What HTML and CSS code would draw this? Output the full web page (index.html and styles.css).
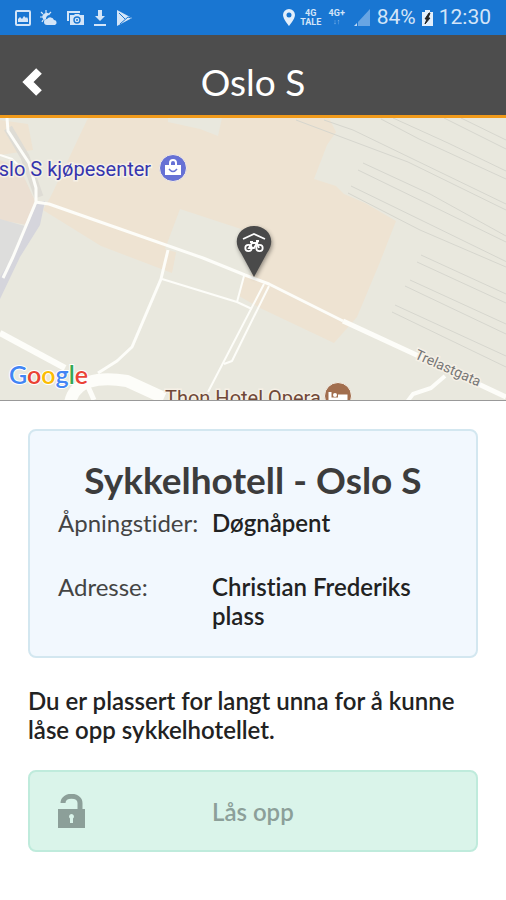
FILE: index.html
```html
<!DOCTYPE html>
<html lang="no">
<head>
  <meta charset="UTF-8">
  <meta name="viewport" content="width=device-width, initial-scale=1.0">
  <title>Oslo S</title>
  <link rel="stylesheet" href="styles.css">
</head>
<body>
  <div class="statusbar">
    <div class="status-left">
      <svg width="16" height="16" viewBox="0 0 16 16">
        <rect x="1" y="1" width="14" height="14" rx="1" fill="none" stroke="currentColor" stroke-width="2"/>
        <path d="M3 12V9l2-2 2 2 2-3 2 2 1-1 1 2v3z" fill="currentColor"/>
      </svg>
      <svg width="18" height="16" viewBox="0 0 18 16">
        <path d="M6 0v3M1 2l2 2M0 7h3M11 2L9 4M2 12l1-2" stroke="currentColor" stroke-width="1.2"/>
        <path d="M3 9a4 4 0 0 1 7-4C7 5 6 7 6 9c-1 0-2 1-2 2z" fill="currentColor"/>
        <path d="M7 15a3 3 0 0 1 0-6 4 4 0 0 1 7 1 2.6 2.6 0 0 1 1 5z" fill="currentColor"/>
      </svg>
      <svg width="17" height="16" viewBox="0 0 17 16">
        <path d="M1 11V2h12" fill="none" stroke="currentColor" stroke-width="2"/>
        <path d="M3 5h4l1-1h4l1 1h4v10H3z" fill="currentColor"/>
        <circle cx="10" cy="10" r="3" fill="none" stroke="#1976d2" stroke-width="1.4"/>
        <circle cx="10" cy="10" r="1" fill="#1976d2"/>
      </svg>
      <svg width="14" height="16" viewBox="0 0 14 16">
        <path d="M5 0h4v6h3l-5 5-5-5h3zM1 14h12v2H1z" fill="currentColor"/>
      </svg>
      <svg width="16" height="16" viewBox="0 0 16 16">
        <path d="M1 0l15 8-15 8z" fill="currentColor"/>
        <path d="M3 3l6 6M15 8l-3-1-8 7" fill="none" stroke="#1976d2" stroke-width="1"/>
      </svg>
    </div>
    <div class="status-right">
      <svg width="12" height="17" viewBox="0 0 12 17">
        <path d="M6 0a6 6 0 0 0-6 6c0 4 6 11 6 11s6-7 6-11a6 6 0 0 0-6-6zm0 3.500a2.500 2.500 0 1 1 0 5 2.500 2.500 0 0 1 0-5z" fill="#e3effb" fill-rule="evenodd"/>
      </svg>
      <span class="net"><span>4G</span><span>TALE</span></span>
      <span class="net"><span>4G+</span><span class="arrows">↓↑</span></span>
      <svg width="18" height="17" viewBox="0 0 18 17">
        <path d="M17 0v17H5V13z" fill="#68a5e3"/>
        <path d="M4 14v3H1z" fill="#c3dcf5"/>
      </svg>
      <span class="status-text">84%</span>
      <svg width="11" height="16" viewBox="0 0 11 16">
        <path d="M3 0h5v2h3v14H0V2h3z" fill="#e3effb"/>
        <path d="M7 3L3 9h2l-2 5 5-6H6l2-5z" fill="#222" stroke="#222"/>
      </svg>
      <span class="status-text">12:30</span>
    </div>
  </div>

  <header class="header">
    <button class="back" aria-label="Tilbake">
      <svg width="20" height="28" viewBox="0 0 20 28">
        <path d="M17 3L6 14l11 11" fill="none" stroke="#fff" stroke-width="8"/>
      </svg>
    </button>
    <h1>Oslo S</h1>
  </header>

  <div class="map">
    <svg viewBox="0 118 506 282" preserveAspectRatio="xMidYMid slice">
      <rect y="118" width="506" height="282" fill="#e9e8de"/>
      <!-- buildings -->
      <g fill="#eee3d2">
        <path d="M88 118h241l7 14-9 13-13 34 22 7 8 8 21 9 31 18-16 41-23 55-23 26-74-35-21-12 5-22 8 1-4-21-68-21-8 40-71-27-58-36 8-14z"/>
        <path d="M0 120l28 4 5 26-33 5z"/>
        <path d="M0 160l20 8 15 33-8 24-27-5z" fill="#ebdfd2"/>
      </g>
      <path d="M168 118h54l-4 18-18-7-32-7z" fill="#e9e8de"/>
      <path d="M180 209l61 20-4 16 12 28-84-24z" fill="#e9e8de"/>
      <path d="M0 219l32 9-19 32-13 20z" fill="#dddddc"/>
      <path d="M37 203l8-2-5 24-20 32-20 42v-22l15-24z" fill="#d5d5dc"/>
      <path d="M8 128l17 29 14 40" fill="none" stroke="#dedcd5" stroke-width="9"/>
      <!-- railway tracks -->
      <g fill="none" stroke="#d6d6ce" stroke-width="1">
        <path d="M296 120l112 42 98 48M324 120l29 10 153 74"/>
        <path d="M381 119l38 20 87 40M393 118l55 25 58 28M444 118l62 31M461 118l45 22"/>
        <path d="M358 170l70 34 78 38M363 163l67 31 76 42"/>
        <path d="M348 193l72 37 86 37M351 186l72 35 86 42"/>
        <path d="M421 255l85 39M417 262l89 41M410 280l96 44M405 286l101 48"/>
        <path d="M395 305l111 51M392 312l114 55"/>
      </g>
      <!-- streets -->
      <g fill="none" stroke="#fdfdf9" stroke-linejoin="round">
        <path d="M7 118l1 13 21 32 7 25 0 14-23 55-10 21" stroke-width="3"/>
        <path d="M0 155l12 4 9 9" stroke-width="2"/>
        <path d="M35 202l14 2 154 54 42 17 24 9 74 37" stroke-width="3"/>
        <path d="M343 321l80 37 83 39" stroke-width="5"/>
        <path d="M168 250l-7 29-29 68-15 14-19 12" stroke-width="3"/>
        <path d="M162 279l75 23 15 7M244 276l-7 26" stroke-width="2"/>
        <path d="M264 284l-56 108M269 286l-37 75-8 3" stroke-width="2"/>
        <path d="M445 376l-14 12-18 6-6 8" stroke-width="4"/>
        <path d="M0 333l65 35" stroke-width="6"/>
        <path d="M70 403c4-22 28-27 57-22l37 17" stroke-width="12"/>
        <path d="M86 382l8 18" stroke-width="5"/>
      </g>
      <g class="map-text">
        <text x="-15" y="176" font-size="20" fill="#3535ae">Oslo S kjøpesenter</text>
        <text x="165" y="405" font-size="20" fill="#704838">Thon Hotel Opera</text>
        <text transform="translate(414 358) rotate(24)" font-size="14" fill="#777">Trelastgata</text>
      </g>
      <!-- shopping marker -->
      <circle cx="173" cy="168" r="13.5" fill="#6671d5" stroke="#f5eee5"/>
      <path d="M165 165h16v10h-16z" fill="#fff"/>
      <path d="M170 166v-3a3 3 0 0 1 6 0v3" fill="none" stroke="#fff" stroke-width="2"/>
      <path d="M169 169q4 5 8 0" fill="none" stroke="#6671d5" stroke-width="1.5"/>
      <!-- hotel marker -->
      <circle cx="338" cy="396" r="13.5" fill="#a16e4e" stroke="#f5f0e8"/>
      <path d="M330 392v12M330 399h16v4M338 396h8v3" fill="none" stroke="#fff" stroke-width="3"/>
      <circle cx="335" cy="395" r="2" fill="#fff"/>
      <!-- bike hotel pin -->
      <path class="pin" d="M254 277l-13-24c-10-13-1-27 13-27s23 14 13 27z"/>
      <g fill="none" stroke="#fff" stroke-width="1.8">
        <path d="M243 239l11-5 11 5"/>
        <circle cx="248.500" cy="248" r="3.200"/>
        <circle cx="259.500" cy="248" r="3.200"/>
        <path d="M249 248l3-5h5l-3 5zM257 243l2 5M250 242h3M256 241h3"/>
      </g>
      <!-- logo -->
      <text class="logo" x="9" y="384" font-size="25"><tspan fill="#4285f4">G</tspan><tspan fill="#ea4335">o</tspan><tspan fill="#fbbc05">o</tspan><tspan fill="#4285f4">g</tspan><tspan fill="#34a853">l</tspan><tspan fill="#ea4335">e</tspan></text>
    </svg>
  </div>

  <main class="content">
    <section class="card">
      <h2>Sykkelhotell - Oslo S</h2>
      <dl class="info">
        <dt>Åpningstider:</dt>
        <dd>Døgnåpent</dd>
        <dt>Adresse:</dt>
        <dd>Christian Frederiks plass</dd>
      </dl>
    </section>

    <p class="message">Du er plassert for langt unna for å kunne låse opp sykkelhotellet.</p>

    <button class="unlock" disabled>
      <svg width="28" height="34" viewBox="0 0 28 34">
        <path d="M5 9c0-9 17-9 17 0v7" fill="none" stroke="#8c9f99" stroke-width="5"/>
        <path d="M0 15h27v19H0z" fill="#8c9f99"/>
        <path d="M13.500 20a2.500 2.500 0 0 1 1.500 4.500V29h-3v-4.500a2.500 2.500 0 0 1 1.500-4.500z" fill="#daf4ea"/>
      </svg>
      <span>Lås opp</span>
    </button>
  </main>
</body>
</html>
```
FILE: styles.css
```css
body {
  margin: 0;
  background: #fff;
  color: #222;
  font-family: Lato, sans-serif;
  font-variant-ligatures: none;
}
.statusbar {
  display: flex;
  justify-content: space-between;
  align-items: center;
  height: 35px;
  padding: 0 15px 0 15px;
  box-sizing: border-box;
  background: #1976d2;
  color: #d3e5f8;
  font-family: Roboto, sans-serif;
}
.status-left {
  display: flex;
  align-items: center;
  gap: 9px;
}
.status-right {
  display: flex;
  align-items: center;
  gap: 6px;
}
.net {
  display: flex;
  flex-direction: column;
  align-items: center;
  width: 20px;
  font-size: 9px;
  line-height: 9px;
  font-weight: bold;
}
.arrows {
  font-size: 7px;
  opacity: 0.6;
}
.status-text {
  font-size: 21px;
  line-height: 35px;
}
.header {
  display: grid;
  grid-template-columns: 64px 1fr 64px;
  align-items: center;
  height: 83px;
  padding-top: 13px;
  box-sizing: border-box;
  background: #4d4d4d;
  border-bottom: 3px solid #f09a1a;
}
.header h1 {
  margin: 0;
  color: #fff;
  font-size: 37px;
  line-height: 48px;
  font-weight: normal;
  text-align: center;
}
.back {
  display: flex;
  justify-content: center;
  padding: 0;
  background: none;
  border: none;
  cursor: pointer;
}
.map {
  height: 282px;
  overflow: hidden;
  border-bottom: 1px solid #999;
}
.map svg {
  display: block;
  width: 100%;
  height: 100%;
}
.map-text {
  font-family: Roboto, sans-serif;
  paint-order: stroke;
  stroke: #f5f0e6;
  stroke-width: 3px;
}
.logo {
  font-family: Lato, sans-serif;
  font-weight: 600;
  paint-order: stroke;
  stroke: #fff;
  stroke-width: 2px;
}
.pin {
  fill: #4a4a4a;
  filter: drop-shadow(1px 2px 2px rgba(0,0,0,0.4));
}
.content {
  padding: 28px;
}
.card {
  padding: 26px 28px;
  background: #f2f8fe;
  border: 2px solid #d3e7f0;
  border-radius: 8px;
}
.card h2 {
  margin: 0;
  color: #3c3c3c;
  font-size: 37px;
  line-height: 46px;
  font-weight: bold;
  text-align: center;
}
.info {
  display: grid;
  grid-template-columns: 154px 1fr;
  row-gap: 35px;
  margin: 5px 0 0;
  font-size: 24px;
  line-height: 29px;
}
.info dt {
  color: #444;
}
.info dd {
  margin: 0;
  font-weight: 600;
}
.message {
  margin: 28px 0 26px;
  font-size: 24px;
  line-height: 29px;
  font-weight: 600;
}
.unlock {
  display: grid;
  grid-template-columns: 154px 1fr;
  align-items: center;
  width: 100%;
  height: 82px;
  padding: 0 28px;
  background: #daf4ea;
  border: 2px solid #bfebdc;
  border-radius: 8px;
  color: #8c9f99;
  font-family: inherit;
  font-size: 24px;
  font-weight: 600;
  text-align: left;
}
```
